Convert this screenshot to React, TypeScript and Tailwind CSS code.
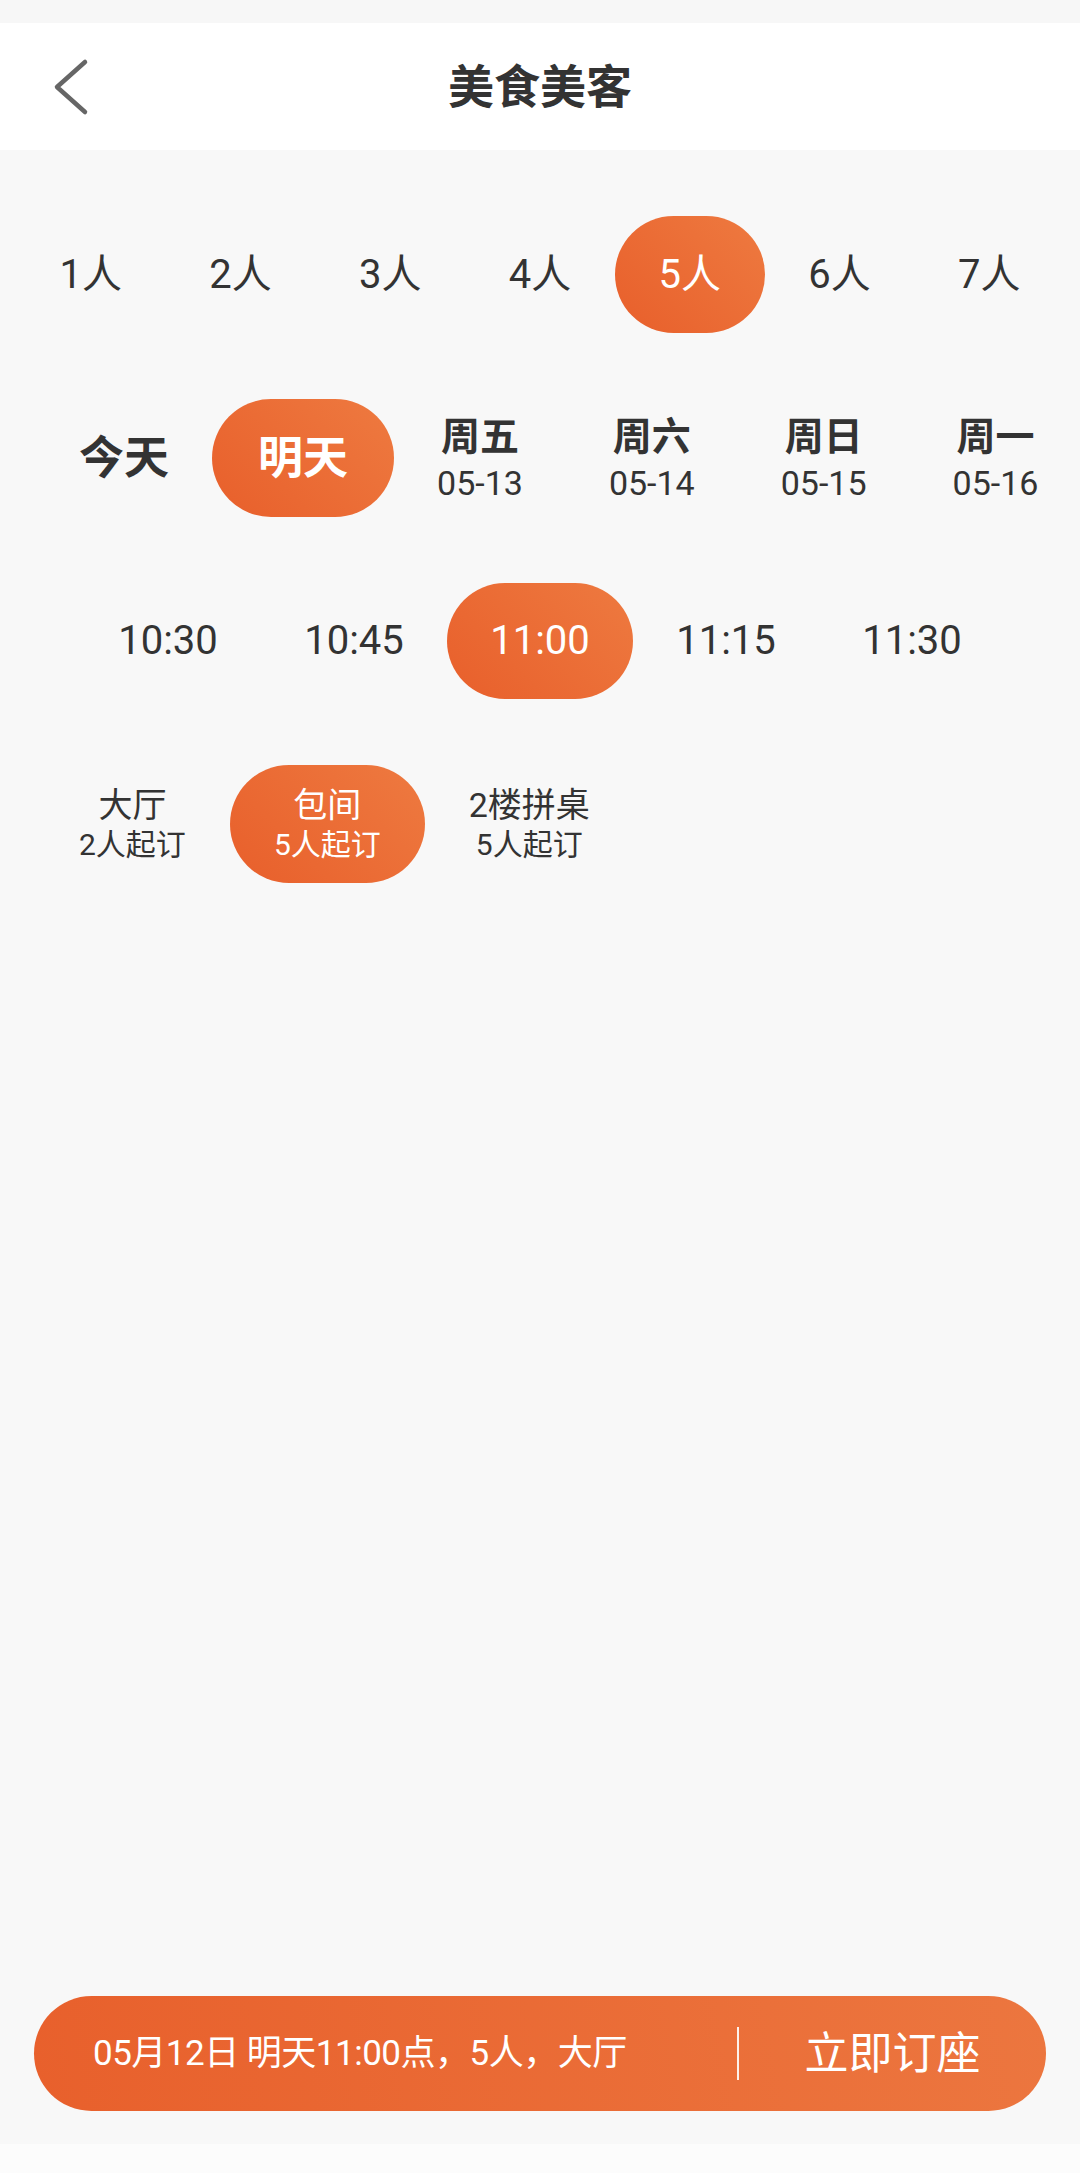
import React from "react";

const font = { fontFamily: "Roboto, 'Noto Sans CJK SC', sans-serif" };

const people = ["1人", "2人", "3人", "4人", "5人", "6人", "7人"];
const days = [
  { w: "周五", d: "05-13" },
  { w: "周六", d: "05-14" },
  { w: "周日", d: "05-15" },
  { w: "周一", d: "05-16" },
];
const times = ["10:30", "10:45", "11:00", "11:15", "11:30"];
const rooms = [
  { n: "大厅", m: "2人起订" },
  { n: "包间", m: "5人起订" },
  { n: "2楼拼桌", m: "5人起订" },
];

const grad = "bg-[linear-gradient(45deg,#E85F2B,#EE7A40)]";

export default function App() {
  return (
    <div
      className="w-[1080px] h-[2173px] flex flex-col bg-[#F8F8F8] text-[#333333] overflow-hidden"
      style={font}
    >
      <div className="h-[23px] bg-[#F7F7F7]" />
      <div className="h-[127px] bg-white grid grid-cols-[1fr_auto_1fr] items-center">
        <div className="pl-[53px] flex items-center">
          <svg width="36" height="58" viewBox="0 0 36 58" fill="none">
            <path
              d="M32 4 L4 29 L32 54"
              stroke="#666666"
              strokeWidth="4.5"
              strokeLinecap="round"
              strokeLinejoin="round"
            />
          </svg>
        </div>
        <div className="text-[46px] font-bold leading-none">美食美客</div>
        <div />
      </div>

      <div className="flex-1 flex flex-col">
        <div className="mt-[66px] h-[117px] flex px-[16px]">
          {people.map((p, i) => (
            <div
              key={p}
              className={`flex-1 flex items-center justify-center rounded-full text-[40px] leading-none ${
                i === 4 ? grad + " text-white" : ""
              }`}
            >
              {p}
            </div>
          ))}
        </div>

        <div className="mt-[66px] h-[118px] flex pl-[36px] whitespace-nowrap">
          <div className="h-full px-[43px] flex items-center text-[45px] font-bold leading-none">
            今天
          </div>
          <div
            className={`h-full px-[46px] flex items-center rounded-full text-white text-[45px] font-bold leading-none ${grad}`}
          >
            明天
          </div>
          {days.map((d) => (
            <div
              key={d.w}
              className="h-full px-[43px] flex flex-col items-center justify-center"
            >
              <div className="text-[39px] font-bold leading-[44px]">{d.w}</div>
              <div className="text-[34px] leading-[36px] mt-[6px]">{d.d}</div>
            </div>
          ))}
        </div>

        <div className="mt-[66px] h-[116px] flex justify-center">
          {times.map((t, i) => (
            <div
              key={t}
              className={`h-full w-[186px] flex items-center justify-center rounded-full text-[40px] leading-none ${
                i === 2 ? grad + " text-white" : ""
              }`}
            >
              {t}
            </div>
          ))}
        </div>

        <div className="mt-[66px] h-[118px] flex pl-[35px] whitespace-nowrap">
          {rooms.map((r, i) => (
            <div
              key={r.n}
              className={`h-full px-[44px] flex flex-col items-center justify-center rounded-full ${
                i === 1 ? grad + " text-white" : ""
              }`}
            >
              <div className="text-[34px] leading-[40px]">{r.n}</div>
              <div className="text-[30px] leading-[36px] mt-[2px]">{r.m}</div>
            </div>
          ))}
        </div>
      </div>

      <div className="px-[34px]">
        <div
          className={`h-[115px] rounded-full flex items-center text-white bg-[linear-gradient(80deg,#E8602C,#EC763F)]`}
        >
          <div className="w-[703px] pl-[59px] text-[35px] leading-none whitespace-nowrap tracking-[-0.5px]">
            05月12日 明天11:00点，5人，大厅
          </div>
          <div className="w-[2px] h-[53px] bg-white/90" />
          <div className="flex-1 flex justify-center text-[44px] leading-none">立即订座</div>
        </div>
      </div>
      <div className="h-[33px]" />
      <div className="h-[29px] bg-[#FCFCFC]" />
    </div>
  );
}
